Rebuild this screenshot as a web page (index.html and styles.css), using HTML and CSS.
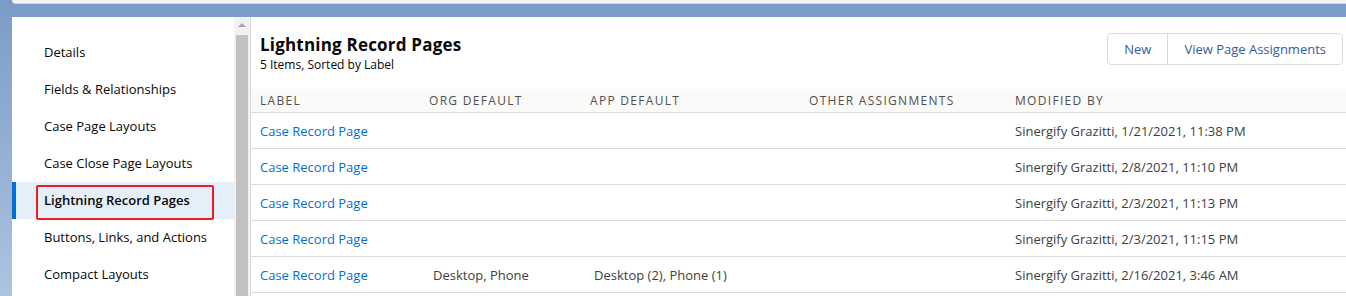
FILE: index.html
```html
<!DOCTYPE html>
<html lang="en">
<head>
  <meta charset="UTF-8">
  <title>Lightning Record Pages</title>
  <link rel="stylesheet" href="styles.css">
</head>
<body>

<div class="top-bar"></div>

<div class="page">
  <nav class="sidebar">
    <a class="nav-item">Details</a>
    <a class="nav-item">Fields &amp; Relationships</a>
    <a class="nav-item">Case Page Layouts</a>
    <a class="nav-item">Case Close Page Layouts</a>
    <a class="nav-item active">Lightning Record Pages<span class="highlight"></span></a>
    <a class="nav-item">Buttons, Links, and Actions</a>
    <a class="nav-item">Compact Layouts</a>
  </nav>

  <div class="scrollbar">
    <div class="scroll-arrow"></div>
    <div class="scroll-thumb"></div>
  </div>

  <main class="content">
    <div class="content-header">
      <div>
        <h1>Lightning Record Pages</h1>
        <div class="subtitle">5 Items, Sorted by Label</div>
      </div>
      <div class="button-group">
        <button>New</button>
        <button>View Page Assignments</button>
      </div>
    </div>

    <div class="table">
      <div class="row head">
        <div>Label</div>
        <div>Org Default</div>
        <div>App Default</div>
        <div>Other Assignments</div>
        <div>Modified By</div>
      </div>
      <div class="row">
        <div><a>Case Record Page</a></div>
        <div></div>
        <div></div>
        <div></div>
        <div>Sinergify Grazitti, 1/21/2021, 11:38 PM</div>
      </div>
      <div class="row">
        <div><a>Case Record Page</a></div>
        <div></div>
        <div></div>
        <div></div>
        <div>Sinergify Grazitti, 2/8/2021, 11:10 PM</div>
      </div>
      <div class="row">
        <div><a>Case Record Page</a></div>
        <div></div>
        <div></div>
        <div></div>
        <div>Sinergify Grazitti, 2/3/2021, 11:13 PM</div>
      </div>
      <div class="row">
        <div><a>Case Record Page</a></div>
        <div></div>
        <div></div>
        <div></div>
        <div>Sinergify Grazitti, 2/3/2021, 11:15 PM</div>
      </div>
      <div class="row">
        <div><a>Case Record Page</a></div>
        <div class="shift">Desktop, Phone</div>
        <div class="shift">Desktop (2), Phone (1)</div>
        <div></div>
        <div>Sinergify Grazitti, 2/16/2021, 3:46 AM</div>
      </div>
    </div>
  </main>
</div>

</body>
</html>
```

FILE: styles.css
```css
body {
  margin: 0;
  height: 296px;
  overflow: hidden;
  font-family: "Open Sans", Arial, sans-serif;
  font-size: 13px;
  color: #3e3e3c;
  background: linear-gradient(180deg, #7b9cc8 0%, #93afd5 50%, #aec3df 100%);
}

.top-bar {
  height: 3px;
  margin-left: 12px;
  background-color: #f3f3f3;
  border-bottom: 1px solid #d4d4d4;
  border-bottom-left-radius: 4px;
}

.page {
  display: flex;
  margin: 13px 0 0 12px;
  height: 279px;
  background-color: #fff;
}

.sidebar {
  width: 222px;
  padding-top: 17px;
  display: flex;
  flex-direction: column;
}

.nav-item {
  position: relative;
  height: 37px;
  line-height: 37px;
  padding-left: 32px;
  color: #080707;
  white-space: nowrap;
}

.nav-item.active {
  background-color: #e5eff9;
  box-shadow: inset 4px 0 0 #0070d2;
  font-weight: 600;
}

.highlight {
  position: absolute;
  left: 24px;
  top: 3px;
  width: 174px;
  height: 31px;
  border: 2px solid #ee1c25;
  border-radius: 2px;
}

.scrollbar {
  width: 16px;
  background-color: #f1f1f1;
  display: flex;
  flex-direction: column;
  align-items: center;
}

.scroll-arrow {
  margin-top: 6px;
  width: 0;
  height: 0;
  border-left: 4px solid transparent;
  border-right: 4px solid transparent;
  border-bottom: 4px solid #a3a3a3;
}

.scroll-thumb {
  margin-top: 8px;
  width: 12px;
  flex: 1;
  background-color: #c1c1c1;
}

.content {
  flex: 1;
  border-left: 1px solid #dddbda;
}

.content-header {
  display: flex;
  justify-content: space-between;
  align-items: flex-start;
  padding: 16px 3px 16px 9px;
  height: 40px;
}

h1 {
  margin: 0;
  font-size: 17px;
  line-height: 24px;
  letter-spacing: 0.2px;
  color: #080707;
}

.subtitle {
  font-size: 12px;
  line-height: 16px;
  color: #080707;
}

.button-group {
  display: flex;
  border: 1px solid #dddbda;
  border-radius: 4px;
}

.button-group button {
  font-family: inherit;
  font-size: 13px;
  height: 30px;
  padding: 0 16px;
  background-color: #fff;
  border: none;
  color: #3a5b9a;
  border-radius: 4px;
}

.button-group button + button {
  border-left: 1px solid #dddbda;
  border-radius: 0 4px 4px 0;
}

.row {
  display: grid;
  grid-template-columns: 169px 161px 219px 206px 1fr;
  height: 35px;
  border-bottom: 1px solid #dddbda;
  align-items: center;
}

.row > div {
  padding-left: 9px;
  white-space: nowrap;
}

.row > div.shift {
  padding-left: 13px;
}

.row.head {
  height: 23px;
  background-color: #fafaf9;
  font-size: 12px;
  text-transform: uppercase;
  letter-spacing: 1.3px;
  color: #514f4d;
}

.row a {
  color: #0070d2;
}
```
